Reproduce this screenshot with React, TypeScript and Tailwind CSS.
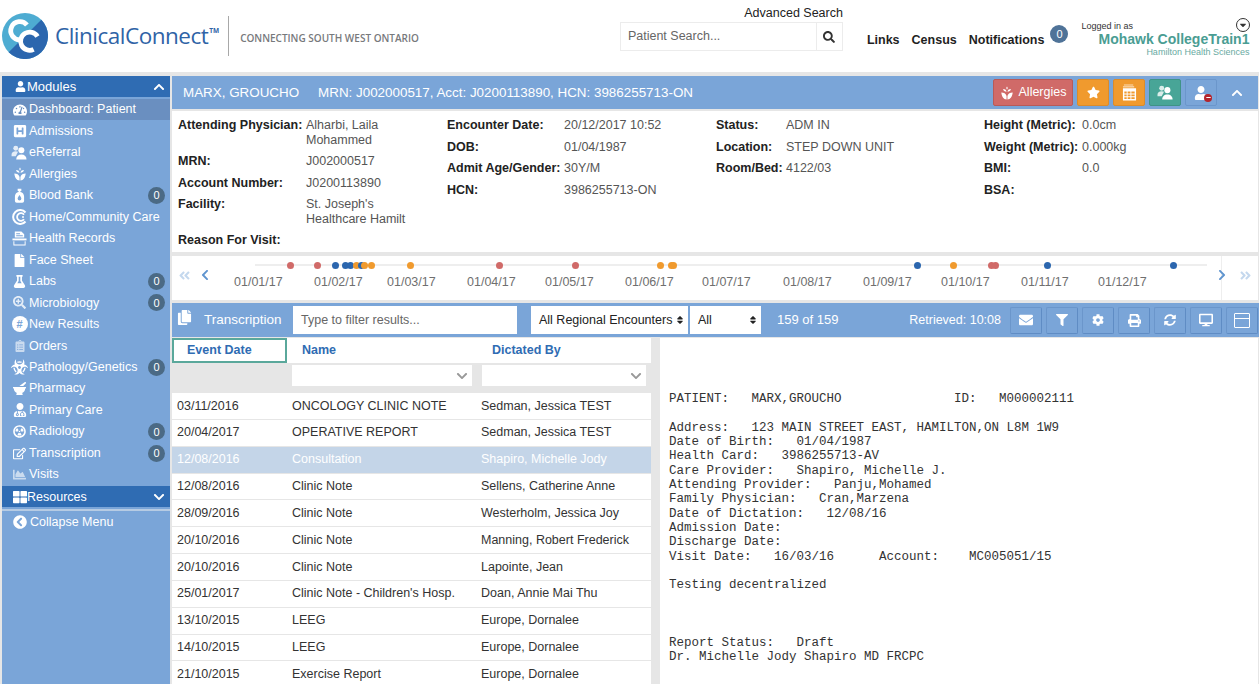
import React from 'react';
import {
  FaUser, FaChevronUp, FaChevronDown, FaTachometerAlt, FaHSquare, FaFile, FaFlask, FaSearchPlus,
  FaClipboardList, FaBiohazard, FaMortarPestle, FaUserMd, FaRadiationAlt, FaRegEdit, FaChartArea, FaThLarge,
  FaChevronCircleLeft, FaStar, FaEnvelope, FaFilter, FaCog, FaPrint, FaSyncAlt, FaDesktop, FaSearch,
  FaChevronLeft, FaChevronRight, FaAngleDoubleLeft, FaAngleDoubleRight, FaSort, FaCopy, FaCaretDown, FaMinus,
} from 'react-icons/fa';

function Wheat({ className = '' }: { className?: string }) {
  return (
    <svg viewBox="0 0 16 16" className={className} fill="currentColor">
      <path d="M8 0.500c1 1 1 2.600 0 3.600C7 3.100 7 1.500 8 0.500z" />
      <path d="M3.500 3.500c2 0 3.600 .8 4 3C5.300 6.500 3.900 5.500 3.500 3.500zM12.500 3.500c-2 0-3.600 .8-4 3C10.700 6.500 12.100 5.500 12.500 3.500z" />
      <path d="M1.500 7.500c2.800 0 5.400 1.200 6 4V15.500C4 15.500 2 12 1.500 7.500zM14.500 7.500c-2.800 0-5.400 1.200-6 4V15.500c3.500 0 5.500-3.500 6-8z" />
    </svg>
  );
}

function CcMark({ className = '' }: { className?: string }) {
  return (
    <svg viewBox="0 0 48 48" className={className}>
      <circle cx="24" cy="24" r="24" fill="#4eacd2" />
      <path d="M41 7A24 24 0 0 1 7 41z" fill="#2b66ae" />
      <path d="M26 12.500A9.500 9.500 0 1 0 19 28" fill="none" stroke="#fff" strokeWidth="5" />
      <path d="M37 24.500A9.500 9.500 0 1 0 33 38" fill="none" stroke="#fff" strokeWidth="5" />
    </svg>
  );
}

function People({ className = '' }: { className?: string }) {
  return (
    <svg viewBox="0 0 18 16" className={className} fill="currentColor">
      <circle cx="5" cy="3.500" r="2.600" opacity="0.8" />
      <path d="M0.500 10.500c0-2.400 1.600-3.800 4.500-3.800 1 0 1.800 .2 2.400 .5L5 12H0.500z" opacity="0.8" />
      <circle cx="11" cy="5.500" r="3.200" />
      <path d="M5.500 15.500c0-3.400 2-5.500 5.500-5.500s5.500 2.100 5.500 5.500z" />
    </svg>
  );
}

function BloodBag({ className = '' }: { className?: string }) {
  return (
    <svg viewBox="0 0 12 16" className={className} fill="currentColor">
      <path fillRule="evenodd" d="M4 0.500h4v2.500H7v1.100c2.500 .6 4 2.400 4 4.900v5a2 2 0 0 1-2 2H3a2 2 0 0 1-2-2v-5c0-2.500 1.500-4.300 4-4.900V3H4zM6 7.500C5 9.300 4 10.300 4 11.500a2 2 0 0 0 4 0C8 10.300 7 9.300 6 7.500z" />
    </svg>
  );
}

function CommunityRings({ className = '' }: { className?: string }) {
  return (
    <svg viewBox="0 0 16 16" className={className} fill="none" stroke="currentColor">
      <path d="M13.500 3.500A7 7 0 1 0 13.500 12.500" strokeWidth="2" />
      <path d="M12 5.800A3.800 3.800 0 1 0 12 10.200" strokeWidth="1.800" />
      <circle cx="11" cy="8" r="1" fill="currentColor" stroke="none" />
    </svg>
  );
}

function RecordTray({ className = '' }: { className?: string }) {
  return (
    <svg viewBox="0 0 16 16" className={className} fill="currentColor">
      <path d="M3 0.500h7l3 3V7H3zM4.500 2.500v1h4v-1zM4.500 4.500v1h7v-1z" fillRule="evenodd" />
      <path d="M0.500 8h15v2h-15z" />
      <path d="M1.500 11h1v3.500h11V11h1v4.500h-13z" />
    </svg>
  );
}

function CalendarStack({ className = '' }: { className?: string }) {
  return (
    <svg viewBox="0 0 16 18" className={className} fill="currentColor">
      <path d="M2 0.500h10v1H2z" opacity="0.7" />
      <path d="M1 2.500h12v1H1z" opacity="0.85" />
      <path fillRule="evenodd" d="M1 4.500h14v13H1zM2.500 8v2h2.500V8zM6 8v2h3V8zM10 8v2h3.500V8zM2.500 11v2h2.500v-2zM6 11v2h3v-2zM10 11v2h3.500v-2zM2.500 14v2h2.500v-2zM6 14v2h3v-2zM10 14v2h3.500v-2z" />
    </svg>
  );
}

const modules = [
  { label: 'Dashboard: Patient', icon: <FaTachometerAlt className="text-[14px]" />, active: true },
  { label: 'Admissions', icon: <FaHSquare className="text-[14px]" /> },
  { label: 'eReferral', icon: <People className="h-[15px] w-[17px]" /> },
  { label: 'Allergies', icon: <Wheat className="h-[14px] w-[14px]" /> },
  { label: 'Blood Bank', icon: <BloodBag className="h-[15px] w-[11px]" />, badge: true },
  { label: 'Home/Community Care', icon: <CommunityRings className="h-[16px] w-[16px]" /> },
  { label: 'Health Records', icon: <RecordTray className="h-[15px] w-[15px]" /> },
  { label: 'Face Sheet', icon: <FaFile className="text-[13px]" /> },
  { label: 'Labs', icon: <FaFlask className="text-[13px]" />, badge: true },
  { label: 'Microbiology', icon: <FaSearchPlus className="text-[13px] opacity-80" />, badge: true },
  { label: 'New Results', icon: <span className="flex h-[16px] w-[16px] items-center justify-center rounded-full bg-white text-[11px] font-bold leading-none text-[#7aa5d8]">#</span> },
  { label: 'Orders', icon: <FaClipboardList className="text-[12px] opacity-60" /> },
  { label: 'Pathology/Genetics', icon: <FaBiohazard className="text-[18px]" />, badge: true },
  { label: 'Pharmacy', icon: <FaMortarPestle className="text-[13px]" /> },
  { label: 'Primary Care', icon: <FaUserMd className="text-[14px]" /> },
  { label: 'Radiology', icon: <FaRadiationAlt className="text-[13px]" />, badge: true },
  { label: 'Transcription', icon: <FaRegEdit className="text-[13px]" />, badge: true },
  { label: 'Visits', icon: <FaChartArea className="text-[13px] opacity-60" /> },
];

const info = [
  [
    ['Attending Physician:', 'Alharbi, Laila Mohammed'],
    ['MRN:', 'J002000517'],
    ['Account Number:', 'J0200113890'],
    ['Facility:', "St. Joseph's Healthcare Hamilt"],
    ['Reason For Visit:', ''],
  ],
  [
    ['Encounter Date:', '20/12/2017 10:52'],
    ['DOB:', '01/04/1987'],
    ['Admit Age/Gender:', '30Y/M'],
    ['HCN:', '3986255713-ON'],
  ],
  [
    ['Status:', 'ADM IN'],
    ['Location:', 'STEP DOWN UNIT'],
    ['Room/Bed:', '4122/03'],
  ],
  [
    ['Height (Metric):', '0.0cm'],
    ['Weight (Metric):', '0.000kg'],
    ['BMI:', '0.0'],
    ['BSA:', ''],
  ],
];

const dates = [
  ['01/01/17', 62], ['01/02/17', 142], ['01/03/17', 215], ['01/04/17', 295], ['01/05/17', 373], ['01/06/17', 453],
  ['01/07/17', 530], ['01/08/17', 611], ['01/09/17', 691], ['01/10/17', 769], ['01/11/17', 849], ['01/12/17', 926],
] as const;

const RED = '#d06a68';
const BLUE = '#2b66ae';
const ORANGE = '#f09a2e';
const dots: [number, string][] = [
  [118, RED], [145, RED], [163, BLUE], [173, BLUE], [178, BLUE], [184, ORANGE], [189, BLUE], [192, ORANGE], [199, ORANGE],
  [238, ORANGE], [327, RED], [403, RED], [488, ORANGE], [499, ORANGE], [501, ORANGE], [745, BLUE], [781, ORANGE],
  [819, RED], [823, RED], [875, BLUE], [1001, BLUE],
];

const rows = [
  ['03/11/2016', 'ONCOLOGY CLINIC NOTE', 'Sedman, Jessica TEST'],
  ['20/04/2017', 'OPERATIVE REPORT', 'Sedman, Jessica TEST'],
  ['12/08/2016', 'Consultation', 'Shapiro, Michelle Jody'],
  ['12/08/2016', 'Clinic Note', 'Sellens, Catherine Anne'],
  ['28/09/2016', 'Clinic Note', 'Westerholm, Jessica Joy'],
  ['20/10/2016', 'Clinic Note', 'Manning, Robert Frederick'],
  ['20/10/2016', 'Clinic Note', 'Lapointe, Jean'],
  ['25/01/2017', "Clinic Note - Children's Hosp.", 'Doan, Annie Mai Thu'],
  ['13/10/2015', 'LEEG', 'Europe, Dornalee'],
  ['14/10/2015', 'LEEG', 'Europe, Dornalee'],
  ['21/10/2015', 'Exercise Report', 'Europe, Dornalee'],
];

const report = `PATIENT:   MARX,GROUCHO               ID:   M000002111

Address:   123 MAIN STREET EAST, HAMILTON,ON L8M 1W9
Date of Birth:   01/04/1987
Health Card:   3986255713-AV
Care Provider:   Shapiro, Michelle J.
Attending Provider:   Panju,Mohamed
Family Physician:   Cran,Marzena
Date of Dictation:   12/08/16
Admission Date:
Discharge Date:
Visit Date:   16/03/16      Account:    MC005051/15

Testing decentralized



Report Status:   Draft
Dr. Michelle Jody Shapiro MD FRCPC`;

function Badge() {
  return <span className="flex h-[17px] w-[17px] items-center justify-center rounded-full bg-[#4b6a85] text-[11px] text-white">0</span>;
}

function ToolButton({ children }: { children: React.ReactNode }) {
  return (
    <button className="flex h-[27px] w-[32px] items-center justify-center rounded-[2px] border border-[#6b96cb] border-b-[#5f8cc4] border-r-[#5f8cc4] text-[14px] text-white">
      {children}
    </button>
  );
}

export default function App() {
  return (
    <div className="flex h-[684px] w-[1259px] flex-col overflow-hidden bg-[#e6e6e6] font-['Liberation_Sans',Arial,sans-serif]">
      {/* Header */}
      <header className="flex h-[72px] shrink-0 items-start bg-white">
        <CcMark className="ml-[2px] mt-[13px] h-[46px] w-[46px]" />
        <div className="ml-[7px] mt-[22px] flex items-start font-['Open_Sans',sans-serif] text-[22.500px] leading-[28px] tracking-[-0.5px] text-[#2f63a6]">
          ClinicalConnect<span className="ml-[1px] mt-[5px] text-[6.500px] font-bold leading-[8px] tracking-normal">TM</span>
        </div>
        <div className="ml-[9px] mt-[16px] h-[40px] w-px bg-[#a8a8a8]" />
        <div className="ml-[11px] mt-[31px] font-['Open_Sans',sans-serif] text-[10px] font-semibold leading-[14px] text-[#77797c]">CONNECTING SOUTH WEST ONTARIO</div>
        <div className="ml-[201px] mt-[5px] flex w-[223px] flex-col items-end">
          <span className="text-[12.500px] leading-[16px] text-[#222]">Advanced Search</span>
          <div className="mt-[1px] flex h-[29px] w-full border border-[#ececec]">
            <span className="flex-1 pl-[7px] text-[12.500px] leading-[27px] text-[#666]">Patient Search...</span>
            <span className="flex w-[26px] items-center justify-center border-l border-[#ececec] text-[12px] text-[#333]"><FaSearch /></span>
          </div>
        </div>
        <nav className="ml-[24px] mt-[32px] flex gap-[12px] text-[12.500px] font-bold leading-[16px] text-[#1f1f1f]">
          <span>Links</span>
          <span>Census</span>
          <span>Notifications</span>
        </nav>
        <span className="ml-[6px] mt-[25px] flex h-[18px] w-[18px] items-center justify-center rounded-full bg-[#4f7398] text-[11px] text-white">0</span>
        <div className="relative ml-[13px] mt-[21px] w-[168px]">
          <div className="text-[9px] leading-[11px] text-[#333]">Logged in as</div>
          <div className="text-right text-[14px] font-bold leading-[14px] text-[#4a9d93]">Mohawk CollegeTrain1</div>
          <div className="text-right text-[9px] leading-[12px] text-[#69aaa2]">Hamilton Health Sciences</div>
          <span className="absolute right-[-1px] top-[-3px] flex h-[14px] w-[14px] items-center justify-center rounded-full border border-[#333] text-[10px] text-[#333]"><FaCaretDown /></span>
        </div>
      </header>

      <div className="flex min-h-0 flex-1 pt-[4px]">
        {/* Sidebar */}
        <aside className="ml-[2px] flex w-[168px] shrink-0 flex-col bg-[#7aa5d8] text-[12.500px] text-white">
          <div className="flex h-[21px] items-center justify-between bg-[#2f6cb3] pl-[13px] pr-[5px]">
            <span className="flex items-center gap-[1px] text-[13px]"><FaUser className="text-[11px]" />Modules</span>
            <FaChevronUp className="text-[12px]" />
          </div>
          <div className="flex flex-col pt-[2px]">
            {modules.map((m) => (
              <div key={m.label} className={`flex h-[21.470px] items-center pr-[5px] ${m.active ? 'bg-[#6a8fc0]' : ''}`}>
                <span className="flex w-[27px] shrink-0 items-center justify-center pl-[9px] pr-[1px]">{m.icon}</span>
                <span className="flex-1 whitespace-nowrap">{m.label}</span>
                {m.badge && <Badge />}
              </div>
            ))}
          </div>
          <div className="mt-[1px] flex h-[21px] items-center justify-between bg-[#2f6cb3] pl-[11px] pr-[5px]">
            <span className="flex items-center"><FaThLarge className="text-[14px]" />Resources</span>
            <FaChevronDown className="text-[12px]" />
          </div>
          <div className="mt-[2px] h-[2px] bg-[#b6cbe3]" />
          <div className="flex h-[21px] items-center gap-[3px] pl-[11px]">
            <FaChevronCircleLeft className="text-[14px]" />Collapse Menu
          </div>
        </aside>

        {/* Main */}
        <main className="ml-[2px] flex min-w-0 flex-1 flex-col pr-[1px]">
          <div className="flex h-[33px] shrink-0 items-center justify-between bg-[#7aa5d8] pl-[11px] pr-[6px] text-white">
            <div className="flex gap-[19px] pt-[1px] text-[13.400px]">
              <span>MARX, GROUCHO</span>
              <span>MRN: J002000517, Acct: J0200113890, HCN: 3986255713-ON</span>
            </div>
            <div className="flex items-center gap-[4px]">
              <button className="flex h-[27px] w-[80px] items-center justify-center gap-[5px] rounded-[2px] border border-[#b95a58] bg-[#d06a68] text-[12.500px]"><Wheat className="h-[14px] w-[14px]" />Allergies</button>
              <button className="flex h-[27px] w-[32px] items-center justify-center rounded-[2px] border border-[#dc8c2a] bg-[#f09a2e] text-[13px]"><FaStar /></button>
              <button className="flex h-[27px] w-[32px] items-center justify-center rounded-[2px] border border-[#dc8c2a] bg-[#f09a2e]"><CalendarStack className="h-[17px] w-[15px]" /></button>
              <button className="flex h-[27px] w-[32px] items-center justify-center rounded-[2px] border border-[#3f9387] bg-[#48a597]"><People className="h-[17px] w-[17px]" /></button>
              <button className="flex h-[27px] w-[32px] items-center justify-center rounded-[2px] border border-[#6b96cb] text-[14px]">
                <span className="relative">
                  <FaUser />
                  <span className="absolute bottom-[-2px] right-[-4px] flex h-[8px] w-[8px] items-center justify-center rounded-full bg-[#b3252d] text-[5px]"><FaMinus /></span>
                </span>
              </button>
              <span className="flex w-[31px] justify-center text-[12px]"><FaChevronUp /></span>
            </div>
          </div>

          {/* Patient details */}
          <div className="mt-[2px] flex h-[141px] shrink-0 bg-white pl-[6px] pt-[7px] text-[12.500px] leading-[14.500px] text-[#555]">
            {info.map((col, i) => (
              <div key={i} className={`flex shrink-0 flex-col ${['w-[269px]', 'w-[269px]', 'w-[268px]', 'w-[270px]'][i]}`}>
                {col.map(([k, v]) => (
                  <div key={k} className="mb-[7px] flex">
                    <span className={`shrink-0 font-bold text-[#222] ${i === 0 ? 'w-[128px]' : i === 1 ? 'w-[117px]' : i === 2 ? 'w-[70px]' : 'w-[98px]'}`}>{k}</span>
                    <span className={i === 0 ? 'w-[105px]' : 'whitespace-nowrap'}>{v}</span>
                  </div>
                ))}
              </div>
            ))}
          </div>

          {/* Timeline */}
          <div className="relative mt-[4px] h-[44px] shrink-0 bg-white text-[#6f6f6f]">
            <FaAngleDoubleLeft className="absolute left-[6px] top-[13px] text-[13px] text-[#c4d8ee]" />
            <FaChevronLeft className="absolute left-[27px] top-[13px] text-[12px] text-[#5f94cf]" />
            <div className="absolute left-[83px] right-[51px] top-[8px] h-[2px] bg-[#eeeeee]" />
            {dots.map(([x, c], i) => (
              <span key={i} className="absolute top-[6px] h-[7px] w-[7px] rounded-full" style={{ left: x - 3, backgroundColor: c }} />
            ))}
            {dates.map(([d, x]) => (
              <span key={d} className="absolute top-[18px] text-[12.500px] leading-[16px]" style={{ left: x }}>{d}</span>
            ))}
            <div className="absolute bottom-0 right-[36px] top-0 w-px bg-[#eeeeee]" />
            <FaChevronRight className="absolute right-[30px] top-[13px] text-[12px] text-[#5f94cf]" />
            <FaAngleDoubleRight className="absolute right-[6px] top-[13px] text-[13px] text-[#c4d8ee]" />
          </div>

          {/* Toolbar */}
          <div className="mt-[3px] mr-[-1px] flex h-[34px] shrink-0 items-center bg-[#7aa5d8] text-[12.500px] text-white">
            <FaCopy className="mb-[6px] ml-[5px] text-[15px]" />
            <span className="ml-[12px] w-[89px] text-[13.500px]">Transcription</span>
            <div className="h-[28px] w-[224px] bg-white pl-[8px] text-[12.500px] leading-[28px] text-[#666]">Type to filter results...</div>
            <div className="ml-[14px] flex h-[28px] w-[157px] items-center justify-between bg-white pl-[8px] pr-[3px] text-[12.500px] text-[#222]">All Regional Encounters<FaSort className="text-[10px]" /></div>
            <div className="ml-[2px] flex h-[28px] w-[71px] items-center justify-between bg-white pl-[8px] pr-[3px] text-[#222]">All<FaSort className="text-[10px]" /></div>
            <span className="ml-[16px] text-[13px]">159 of 159</span>
            <span className="ml-auto mr-[9px] text-[12.500px]">Retrieved: 10:08</span>
            <div className="flex items-center gap-[4px] pr-[1px]">
              <ToolButton><FaEnvelope /></ToolButton>
              <ToolButton><FaFilter className="text-[12px]" /></ToolButton>
              <ToolButton><FaCog className="text-[12px]" /></ToolButton>
              <ToolButton><FaPrint className="text-[13px]" /></ToolButton>
              <ToolButton><FaSyncAlt className="text-[12px]" /></ToolButton>
              <ToolButton><FaDesktop /></ToolButton>
              <ToolButton><span className="flex h-[15px] w-[16px] flex-col rounded-[1px] border border-white"><span className="h-[5px] border-b border-white" /></span></ToolButton>
            </div>
          </div>

          {/* Results + report */}
          <div className="flex min-h-0 flex-1 pt-[1px]">
            <div className="flex w-[479px] shrink-0 flex-col overflow-hidden">
              <div className="flex h-[25px] shrink-0 bg-white text-[12.500px] font-bold text-[#2f6cb3]">
                <div className="flex w-[115px] items-center border-2 border-[#5aa89b] pl-[13px]">Event Date</div>
                <div className="flex w-[200px] items-center pl-[15px]">Name</div>
                <div className="flex items-center pl-[5px]">Dictated By</div>
              </div>
              <div className="flex h-[30px] shrink-0 items-start bg-[#e6e6e6] pl-[120px] pt-[2px]">
                <div className="flex h-[21px] w-[180px] items-center justify-end bg-white pr-[4px] text-[12px] text-[#999]"><FaChevronDown /></div>
                <div className="ml-[10px] flex h-[21px] w-[164px] items-center justify-end bg-white pr-[4px] text-[12px] text-[#999]"><FaChevronDown /></div>
              </div>
              {rows.map(([d, n, by], i) => (
                <div key={i} className={`flex h-[26.850px] shrink-0 items-center border-b border-[#e6e6e6] text-[12.500px] ${i === 2 ? 'bg-[#c4d5e8] text-white' : 'bg-white text-[#333]'}`}>
                  <span className="w-[120px] pl-[5px]">{d}</span>
                  <span className="w-[189px] whitespace-nowrap">{n}</span>
                  <span className="whitespace-nowrap">{by}</span>
                </div>
              ))}
            </div>
            <div className="ml-[9px] min-w-0 flex-1 bg-white pl-[9px] pt-[54px]">
              <pre className="font-['Liberation_Mono',monospace] text-[12.500px] leading-[14.330px] text-[#333]">{report}</pre>
            </div>
          </div>
        </main>
      </div>
    </div>
  );
}
